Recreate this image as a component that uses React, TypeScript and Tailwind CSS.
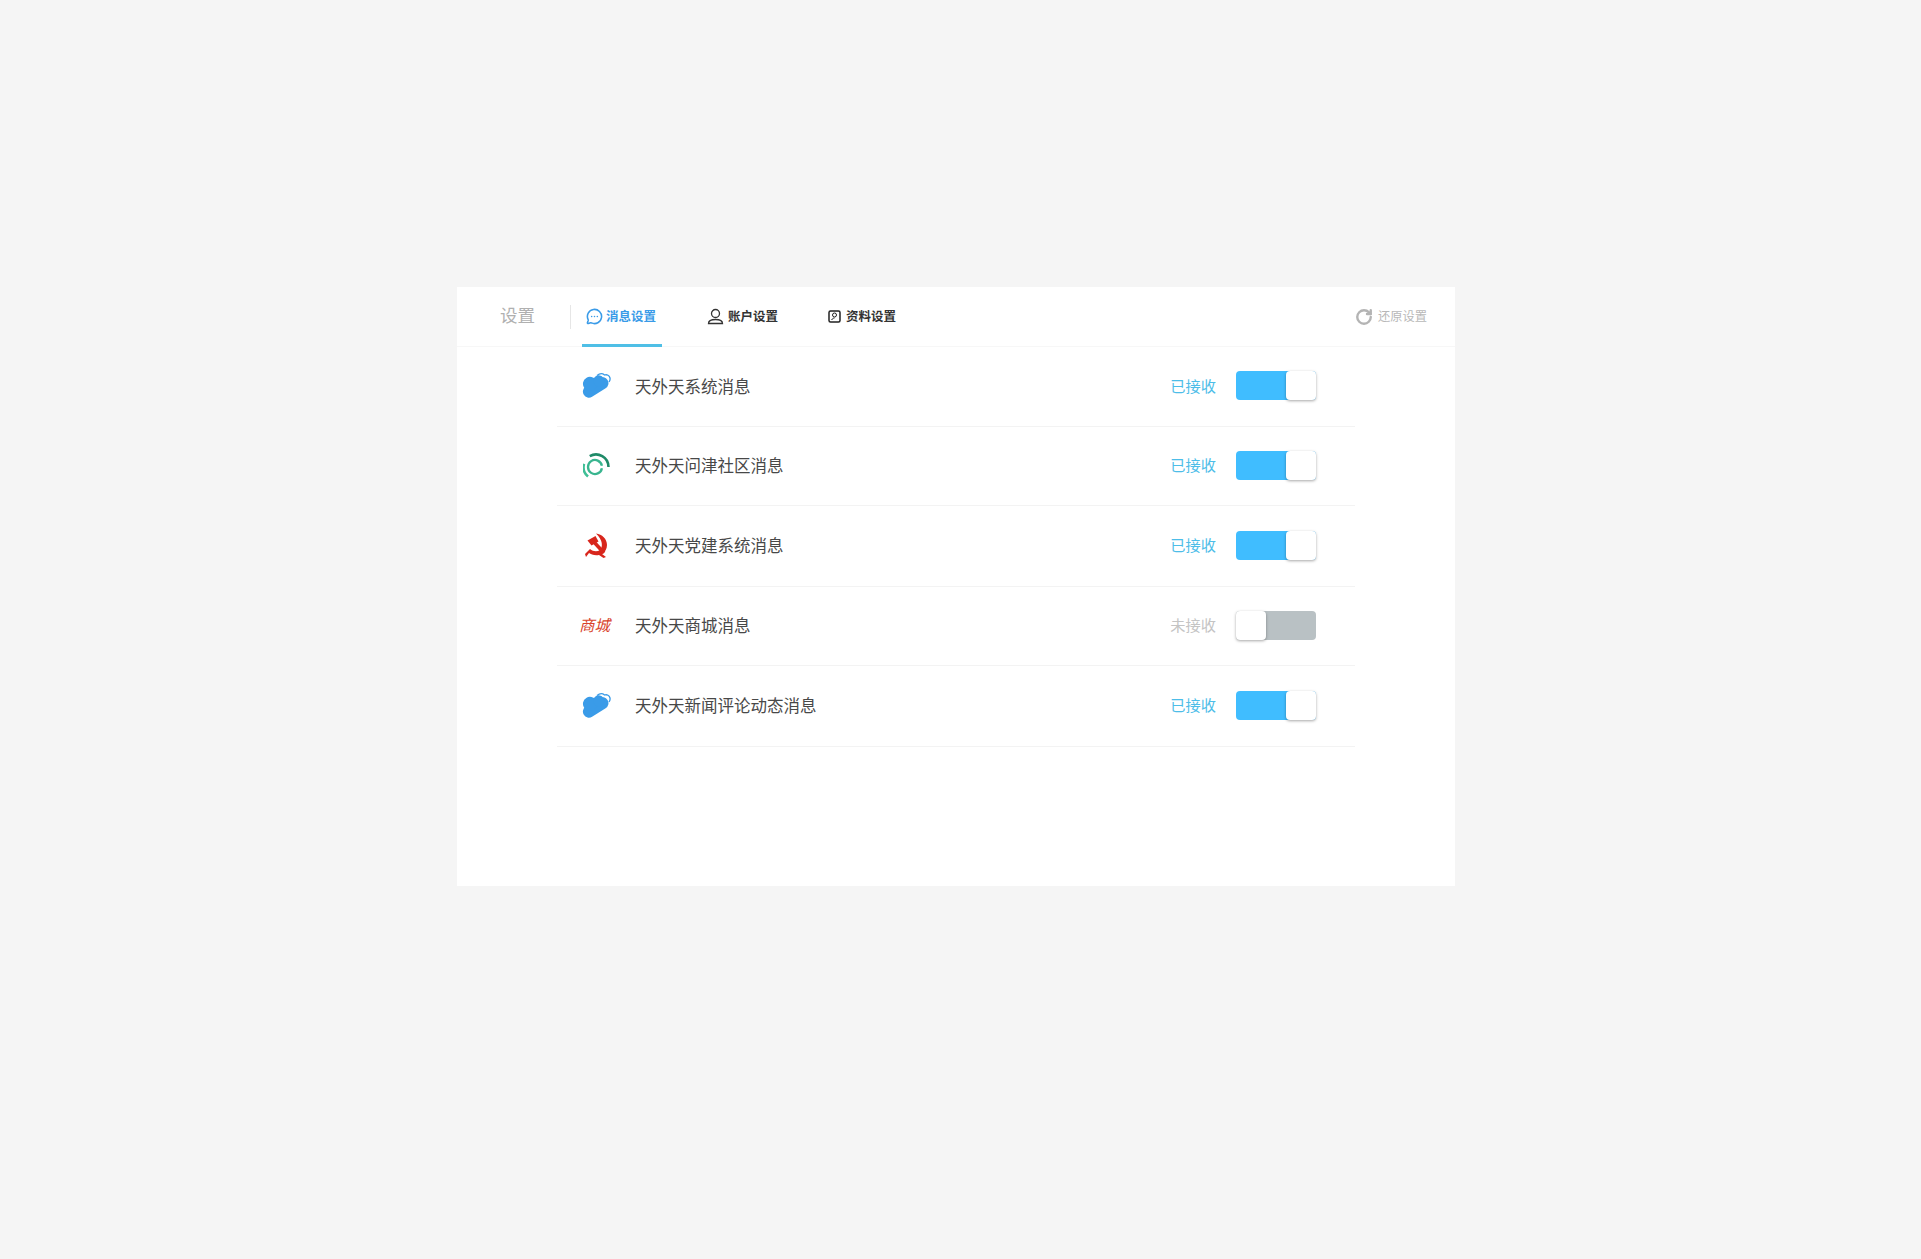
import React from "react";
import { MessageCircleMore, RotateCw } from "lucide-react";

const font = "font-['Noto_Sans_CJK_SC','Liberation_Sans',sans-serif]";

const CloudIcon = () => (
  <svg width="29" height="25" viewBox="0 0 29 25" className="ml-[3px]">
    <path d="M15 2.500c2.500-2 5.500-2.200 7.500-.5 2.500-.8 5 .5 5.500 3 .3 1.500-.3 3-1 4" fill="none" stroke="#3a9be8" strokeWidth="1.300" />
    <g fill="#3a9be8" transform="rotate(-32 14 13)">
      <rect x="-1" y="8" width="28" height="12" rx="6" />
      <circle cx="10" cy="8" r="7" />
      <circle cx="19" cy="10" r="5.500" />
    </g>
  </svg>
);

const RingIcon = () => (
  <svg width="27" height="25" viewBox="0 0 27 25" fill="none" className="ml-[4px]">
    <path d="M6.750 3.200A12.500 12.500 0 0 1 25.500 14" stroke="#1f8a68" strokeWidth="2.600" />
    <path d="M1 10.800A12.500 12.500 0 0 0 5 23.600" stroke="#3fbf96" strokeWidth="2.600" />
    <path d="M18.900 15.200A7 7 0 1 1 18.900 12.800" stroke="#39b58f" strokeWidth="2.300" />
  </svg>
);

const PartyIcon = () => (
  <svg width="24" height="25" viewBox="0 0 24 25" fill="#d8261c" className="ml-[6px]">
    <path d="M11 .5C17 1 22 6 22 12c0 4-2 7-5 9l4 3-2.500 1-4.500-3c-4 1-8-.5-10-2l-3 4-1-3 5-5c3 2.500 7 3 10 1 3-3 3-10-4-16.500z" />
    <path d="M2.500 7.500L10.500 3l3 5.500-7 4z" />
    <path d="M8.500 8.500L19 20" stroke="#d8261c" strokeWidth="3.500" fill="none" />
  </svg>
);

type Row = {
  name: string;
  on: boolean;
  icon: React.ReactNode;
  height: string;
};

const rows: Row[] = [
  { name: "天外天系统消息", on: true, icon: <CloudIcon />, height: "h-[80px]" },
  { name: "天外天问津社区消息", on: true, icon: <RingIcon />, height: "h-[79px]" },
  { name: "天外天党建系统消息", on: true, icon: <PartyIcon />, height: "h-[81px]" },
  {
    name: "天外天商城消息",
    on: false,
    icon: <span className="text-[15.500px] italic text-[#d9432a] whitespace-nowrap">商城</span>,
    height: "h-[79px]",
  },
  { name: "天外天新闻评论动态消息", on: true, icon: <CloudIcon />, height: "h-[81px]" },
];

const Toggle = ({ on }: { on: boolean }) => (
  <div className={`relative w-[80px] h-[29px] rounded-[4px] ${on ? "bg-[#40bdff]" : "bg-[#b9c1c4]"}`}>
    <div
      className={`absolute top-0 h-[29px] w-[30px] rounded-[4px] bg-white shadow-[0_1px_3px_rgba(0,0,0,0.35)] ${
        on ? "right-0" : "left-0"
      }`}
    />
  </div>
);

export default function App() {
  return (
    <div className={`min-h-[1259px] bg-[#f5f5f5] pt-[287px] pl-[457px] ${font}`}>
      <div className="w-[998px] h-[599px] bg-white">
        <div className="flex items-center h-[60px] border-b border-[#f7f7f7]">
          <div className="w-[113px] pl-[43px] pb-[2px] text-[17.500px] text-[#b0b0b0]">设置</div>
          <div className="w-px h-[24px] bg-[#e6e6e6]" />
          <div className="ml-[11px] flex items-center gap-[3px] w-[80px] h-[60px] pl-[4px] border-b-[3px] border-[#4fbfe6] pt-[2px] text-[12.500px] font-semibold text-[#3a9be8]">
            <MessageCircleMore size={17} strokeWidth={2.2} />
            <span className="whitespace-nowrap">消息设置</span>
          </div>
          <div className="ml-[45px] flex items-center gap-[4px] text-[12.500px] font-semibold text-[#333333]">
            <svg width="17" height="17" viewBox="0 0 17 17" fill="none" stroke="#333333" strokeWidth="1.300">
              <circle cx="8.500" cy="5.500" r="4" />
              <path d="M1.500 15.500c0-2.800 2.500-4 7-4s7 1.200 7 4z" />
            </svg>
            <span>账户设置</span>
          </div>
          <div className="ml-[50px] flex items-center gap-[5px] text-[12.500px] font-semibold text-[#333333]">
            <svg width="13" height="13" viewBox="0 0 13 13" fill="none" stroke="#222222" strokeWidth="1.500">
              <rect x="1" y="1" width="11" height="11" rx="1.500" />
              <circle cx="6.500" cy="5" r="2" strokeWidth="1" />
              <path d="M3.500 10c1-1.500 2-2 3-2" strokeWidth="1" />
            </svg>
            <span>资料设置</span>
          </div>
          <div className="ml-auto mr-[28px] flex items-center gap-[5px] text-[12.250px] text-[#b8b8b8]">
            <RotateCw size={18} strokeWidth={3.2} className="text-[#b4b4b4]" />
            <span>还原设置</span>
          </div>
        </div>
        <div className="ml-[100px] w-[798px]">
          {rows.map((row) => (
            <div key={row.name} className={`flex items-center ${row.height} border-b border-[#f3f3f3]`}>
              <div className="w-[78px] pl-[22px] pb-[2px] flex items-center">{row.icon}</div>
              <div className="flex-1 pb-[1px] text-[16.500px] text-[#484848]">{row.name}</div>
              <div className={`pb-[3px] text-[15.250px] ${row.on ? "text-[#4dbde8]" : "text-[#c4c4c4]"}`}>
                {row.on ? "已接收" : "未接收"}
              </div>
              <div className="ml-[20px] mr-[39px] pb-[2px]">
                <Toggle on={row.on} />
              </div>
            </div>
          ))}
        </div>
      </div>
    </div>
  );
}
